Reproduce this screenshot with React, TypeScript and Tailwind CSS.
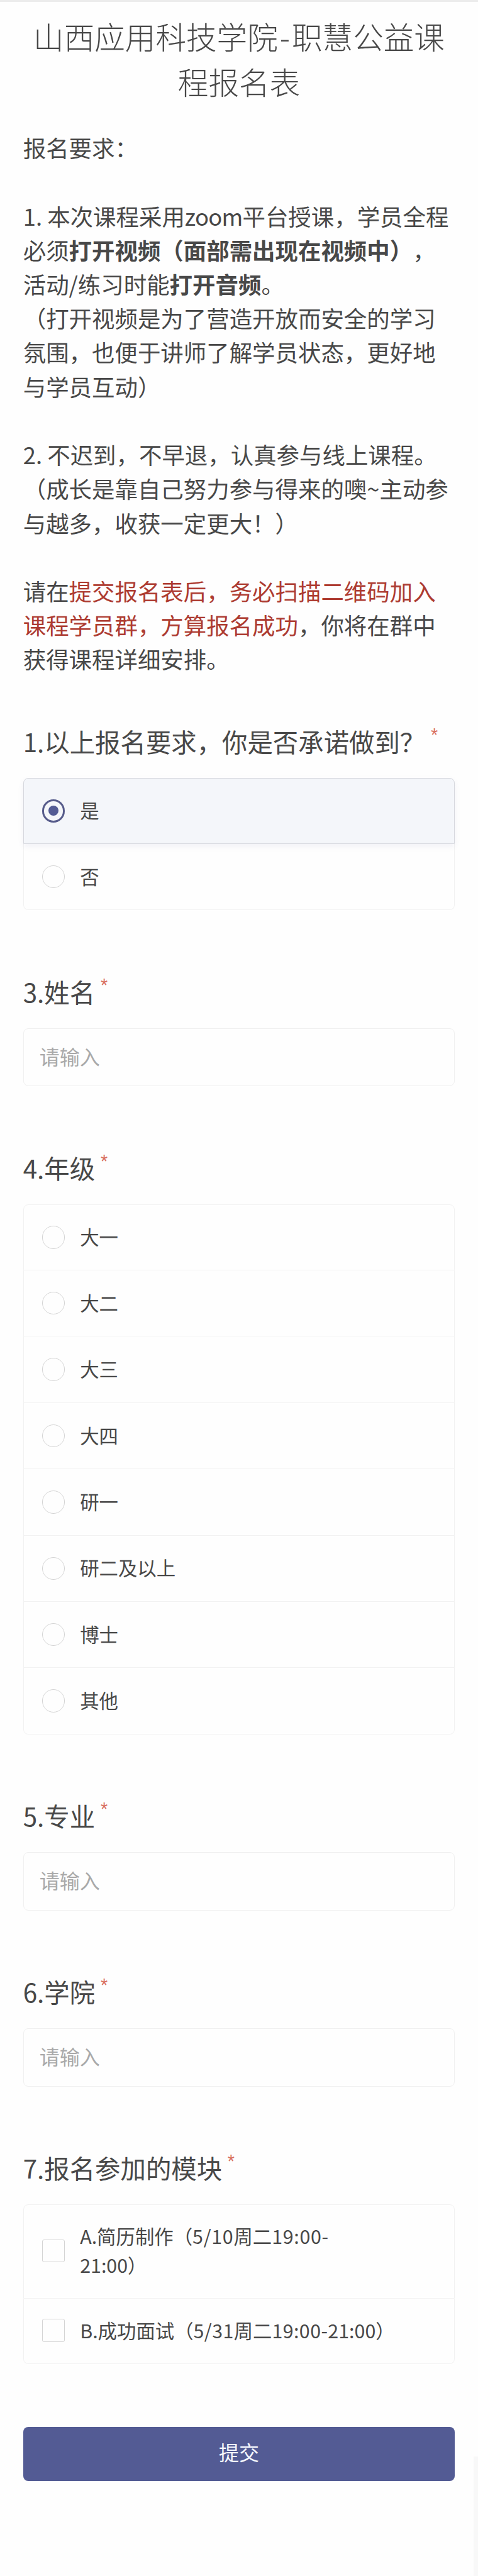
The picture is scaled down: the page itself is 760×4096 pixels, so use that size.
import React, { useState } from 'react';

interface QuestionProps {
  title: string;
  children: React.ReactNode;
}

interface OptionProps {
  checked: boolean;
  onSelect: () => void;
  children: React.ReactNode;
}

const grades = ['大一', '大二', '大三', '大四', '研一', '研二及以上', '博士', '其他'];

const Question: React.FC<QuestionProps> = ({ title, children }) => (
  <section className="mb-[100.4px]">
    <h2 className="h-[56px] leading-[57px] mb-[31px] text-[40.4px] font-normal whitespace-nowrap flex items-start">
      <span>{title}</span>
      <span className="ml-[9px] text-[25px] leading-[38px] font-['Roboto'] text-[#d9705f]">*</span>
    </h2>
    <div>{children}</div>
  </section>
);

const RadioOption: React.FC<OptionProps> = ({ checked, onSelect, children }) => (
  <button
    type="button"
    onClick={onSelect}
    className={`w-full h-[105.4px] pl-[29px] flex items-center text-left border-x border-b first:border-t first:rounded-t-[8px] last:rounded-b-[8px] ${
      checked
        ? 'relative bg-[#f4f6fa] border-[#d6d8de] shadow-[0_4px_10px_rgba(83,91,148,0.08)]'
        : 'border-[#f2f2f2]'
    }`}
  >
    <span
      className={`w-[36.5px] h-[36.5px] rounded-full shrink-0 flex items-center justify-center ${
        checked ? 'border-[3.5px] border-[#575c8b]' : 'border border-[#d4d4d4]'
      }`}
    >
      {checked && <span className="w-4 h-4 rounded-full bg-[#535b94]" />}
    </span>
    <span className="ml-[24px] -mt-[3px] text-[30.4px] leading-[46px]">{children}</span>
  </button>
);

const CheckOption: React.FC<OptionProps> = ({ checked, onSelect, children }) => (
  <button
    type="button"
    onClick={onSelect}
    className="w-full pl-[29px] pt-[27.5px] pb-[29.5px] flex items-center text-left border-x border-b border-[#f2f2f2] first:border-t first:rounded-t-[8px] last:rounded-b-[8px]"
  >
    <span
      className={`w-[36.5px] h-[36.5px] rounded-[3px] shrink-0 border ${
        checked ? 'bg-[#535b94] border-[#535b94]' : 'border-[#d4d4d4]'
      }`}
    />
    <span className="ml-[24px] text-[30.4px] leading-[45.7px] whitespace-nowrap">{children}</span>
  </button>
);

const TextField: React.FC = () => (
  <input
    type="text"
    placeholder="请输入"
    className="block w-full h-[92.5px] px-[25px] pb-[4px] text-[32.1px] rounded-[8px] border border-[#f0f0f0] bg-transparent placeholder-[#a9a9a9] focus:outline-none"
  />
);

export default function App() {
  const [agree, setAgree] = useState('是');
  const [grade, setGrade] = useState('');
  const [modules, setModules] = useState<string[]>([]);

  const toggleModule = (id: string) => {
    setModules(prev => (prev.includes(id) ? prev.filter(m => m !== id) : [...prev, id]));
  };

  return (
    <div className="relative w-[760px] h-[4096px] overflow-hidden bg-[#fefefe] text-[#484848] font-['Noto_Sans_CJK_SC',sans-serif] [text-spacing-trim:space-all]">
      <div className="h-[3px] bg-[#ececec]" />

      <main className="px-[36.7px] pt-[18px]">
        <h1 className="text-[48.6px] leading-[72.3px] font-light text-center whitespace-nowrap">
          <div>
            山西应用科技学院<span className="mx-[3px]">-</span>职慧公益课
          </div>
          <div>程报名表</div>
        </h1>

        {/* Intro */}
        <div className="mt-[41.5px] mb-[75px] text-[36.45px] leading-[54.22px] whitespace-nowrap">
          <p>报名要求：</p>
          <br />
          <p>1. 本次课程采用<span className="tracking-[-0.8px]">zoom</span>平台授课，学员全程</p>
          <p>必须<b>打开视频（面部需出现在视频中）</b>，</p>
          <p>活动/练习时能<b>打开音频</b>。</p>
          <p>（打开视频是为了营造开放而安全的学习</p>
          <p>氛围，也便于讲师了解学员状态，更好地</p>
          <p>与学员互动）</p>
          <br />
          <p>2. 不迟到，不早退，认真参与线上课程。</p>
          <p>（成长是靠自己努力参与得来的噢~主动参</p>
          <p>与越多，收获一定更大！）</p>
          <br />
          <p>请在<span className="text-[#ad3b31]">提交报名表后，务必扫描二维码加入</span></p>
          <p><span className="text-[#ad3b31]">课程学员群，方算报名成功</span>，你将在群中</p>
          <p>获得课程详细安排。</p>
        </div>

        <Question title="1.以上报名要求，你是否承诺做到？">
          {['是', '否'].map(value => (
            <RadioOption key={value} checked={agree === value} onSelect={() => setAgree(value)}>
              {value}
            </RadioOption>
          ))}
        </Question>

        <Question title="3.姓名">
          <TextField />
        </Question>

        <Question title="4.年级">
          {grades.map(value => (
            <RadioOption key={value} checked={grade === value} onSelect={() => setGrade(value)}>
              {value}
            </RadioOption>
          ))}
        </Question>

        <Question title="5.专业">
          <TextField />
        </Question>

        <Question title="6.学院">
          <TextField />
        </Question>

        <Question title="7.报名参加的模块">
          <CheckOption checked={modules.includes('A')} onSelect={() => toggleModule('A')}>
            A.简历制作（<span className="tracking-[0.7px]">5/10</span>周二<span className="tracking-[0.7px]">19:00-</span><br />21:00）
          </CheckOption>
          <CheckOption checked={modules.includes('B')} onSelect={() => toggleModule('B')}>
            B.成功面试（<span className="tracking-[0.4px]">5/31</span>周二<span className="tracking-[0.4px]">19:00-</span>21:00）
          </CheckOption>
        </Question>

        <button type="button" className="w-full h-[86px] pb-[9px] rounded-[8px] bg-[#535b94] text-[#f6f8ff] text-[32.1px]">
          提交
        </button>
      </main>

      {/* Scrollbar */}
      <div className="absolute right-0 bottom-0 w-[7px] h-[190px] bg-[#f8f8f8]" />
    </div>
  );
}
